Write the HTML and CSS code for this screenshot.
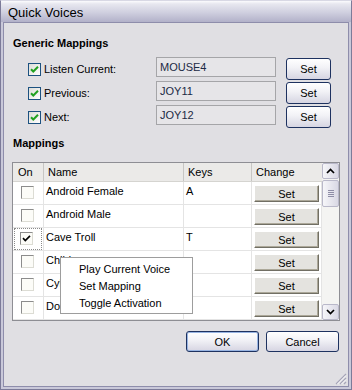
FILE: index.html
```html
<!DOCTYPE html>
<html>

<head>
    <title>Quick Voices</title>
    <link rel="stylesheet" href="styles.css">
</head>

<body>
    <div class="window">
        <div class="titlebar">Quick Voices</div>
        <div class="client">
            <h2 class="group-title">Generic Mappings</h2>
            <div class="map-rows">
                <div class="map-row">
                    <label class="chk">
                        <span class="xp-box"><svg viewBox="0 0 11 11" width="11" height="11"><path d="M2 5.2 L4.3 7.5 L9 2.8" fill="none" stroke="#21a121" stroke-width="2"/></svg></span>
                        Listen Current:
                    </label>
                    <div class="field">MOUSE4</div>
                    <button class="xp-btn set-btn">Set</button>
                </div>
                <div class="map-row">
                    <label class="chk">
                        <span class="xp-box"><svg viewBox="0 0 11 11" width="11" height="11"><path d="M2 5.2 L4.3 7.5 L9 2.8" fill="none" stroke="#21a121" stroke-width="2"/></svg></span>
                        Previous:
                    </label>
                    <div class="field">JOY11</div>
                    <button class="xp-btn set-btn">Set</button>
                </div>
                <div class="map-row">
                    <label class="chk">
                        <span class="xp-box"><svg viewBox="0 0 11 11" width="11" height="11"><path d="M2 5.2 L4.3 7.5 L9 2.8" fill="none" stroke="#21a121" stroke-width="2"/></svg></span>
                        Next:
                    </label>
                    <div class="field">JOY12</div>
                    <button class="xp-btn set-btn">Set</button>
                </div>
            </div>

            <h2 class="group-title mappings-title">Mappings</h2>
            <div class="list">
                <div class="list-main">
                    <div class="list-head">
                        <div class="col-on">On</div>
                        <div class="col-name">Name</div>
                        <div class="col-keys">Keys</div>
                        <div class="col-change">Change</div>
                    </div>
                    <!-- rows -->
                    <div class="list-row">
                        <div class="col-on"><span class="flat-box"></span></div>
                        <div class="col-name">Android Female</div>
                        <div class="col-keys">A</div>
                        <div class="col-change"><button class="row-btn">Set</button></div>
                    </div>
                    <div class="list-row">
                        <div class="col-on"><span class="flat-box"></span></div>
                        <div class="col-name">Android Male</div>
                        <div class="col-keys"></div>
                        <div class="col-change"><button class="row-btn">Set</button></div>
                    </div>
                    <div class="list-row">
                        <div class="col-on"><span class="focus"><span class="flat-box"><svg viewBox="0 0 11 11" width="11" height="11"><path d="M2 5.2 L4.3 7.5 L9 2.8" fill="none" stroke="#000" stroke-width="1.7"/></svg></span></span></div>
                        <div class="col-name">Cave Troll</div>
                        <div class="col-keys">T</div>
                        <div class="col-change"><button class="row-btn">Set</button></div>
                    </div>
                    <div class="list-row">
                        <div class="col-on"><span class="flat-box"></span></div>
                        <div class="col-name">Child</div>
                        <div class="col-keys"></div>
                        <div class="col-change"><button class="row-btn">Set</button></div>
                    </div>
                    <div class="list-row">
                        <div class="col-on"><span class="flat-box"></span></div>
                        <div class="col-name">Cyborg</div>
                        <div class="col-keys"></div>
                        <div class="col-change"><button class="row-btn">Set</button></div>
                    </div>
                    <div class="list-row">
                        <div class="col-on"><span class="flat-box"></span></div>
                        <div class="col-name">Dog</div>
                        <div class="col-keys"></div>
                        <div class="col-change"><button class="row-btn">Set</button></div>
                    </div>
                </div>
                <div class="scrollbar">
                    <div class="sb-btn"><svg viewBox="0 0 9 6" width="9" height="6"><path d="M1 5 L4.5 1.5 L8 5" fill="none" stroke="#000" stroke-width="1.7"/></svg></div>
                    <div class="sb-thumb"><span></span><span></span><span></span><span></span></div>
                    <div class="sb-track"></div>
                    <div class="sb-btn"><svg viewBox="0 0 9 6" width="9" height="6"><path d="M1 1 L4.5 4.5 L8 1" fill="none" stroke="#000" stroke-width="1.7"/></svg></div>
                </div>
            </div>

            <div class="actions">
                <button class="xp-btn action-btn default">OK</button>
                <button class="xp-btn action-btn">Cancel</button>
            </div>
            <svg class="grip" viewBox="0 0 12 12" width="12" height="12">
                <path d="M11 1 L1 11 M11 5 L5 11 M11 9 L9 11" stroke="#a6a5b8" stroke-width="1.2"/>
                <path d="M11 2.5 L2.5 11 M11 6.5 L6.5 11" stroke="#fff" stroke-width="0.8"/>
            </svg>
        </div>

        <!-- context menu over the list -->
        <div class="menu">
            <div class="menu-item">Play Current Voice</div>
            <div class="menu-item">Set Mapping</div>
            <div class="menu-item">Toggle Activation</div>
        </div>
    </div>
</body>

</html>
```

FILE: styles.css
```css
body {
    margin: 0;
    background: #e8e8e8;
    font-family: "Liberation Sans", Arial, sans-serif;
    font-size: 11px;
    color: #000;
}

.window {
    position: relative;
    width: 352px;
    height: 390px;
    box-sizing: border-box;
    display: flex;
    flex-direction: column;
    background: #c9c8d9;
    border: 1px solid #7c7b99;
    border-top-color: #d8d8e4;
    padding: 0 2px 2px;
}

.titlebar {
    height: 21px;
    margin: 0 -2px;
    padding: 2px 0 0 7px;
    box-sizing: border-box;
    font-size: 13px;
    line-height: 19px;
    background: linear-gradient(to bottom, #fbfbfd 0, #e7e7ef 3px, #cfcfdf 55%, #b2b1c9 100%);
}

.client {
    position: relative;
    flex: 1;
    display: flex;
    flex-direction: column;
    background: #e0dfe3;
    border: 1px solid #8e8dab;
}

.group-title {
    margin: 14px 0 0 9px;
    font-size: 11px;
    line-height: 13px;
    font-weight: bold;
}

.mappings-title {
    margin-top: 9px;
}

.map-rows {
    margin-top: 8px;
    padding-left: 24px;
    display: flex;
    flex-direction: column;
    gap: 2px;
}

.map-row {
    display: flex;
    align-items: flex-start;
    height: 22px;
}

.chk {
    width: 128px;
    height: 22px;
    display: flex;
    align-items: center;
    gap: 3px;
}

.xp-box {
    width: 11px;
    height: 11px;
    border: 1px solid #1c5180;
    background: linear-gradient(135deg, #dcdcd7, #ffffff);
    display: flex;
}

.field {
    width: 120px;
    height: 20px;
    margin-top: -1px;
    box-sizing: border-box;
    border: 1px solid #a5a5a8;
    background: #e6e5e8;
    padding: 3px 0 0 3px;
    color: #1b2a44;
}

.xp-btn {
    font-family: "Liberation Sans", Arial, sans-serif;
    font-size: 11px;
    color: #000;
    border: 1px solid #1e3260;
    border-radius: 3px;
    background: linear-gradient(to bottom, #ffffff 0, #f3f3f7 40%, #d6d5e2 100%);
    padding: 0;
}

.set-btn {
    width: 45px;
    height: 22px;
    margin-left: 10px;
}

.list {
    margin: 12px 0 0 8px;
    width: 328px;
    height: 159px;
    box-sizing: border-box;
    border: 1px solid #8e8e94;
    background: #fff;
    display: flex;
    overflow: hidden;
}

.list-main {
    width: 309px;
}

.list-head,
.list-row {
    display: flex;
}

.list-head {
    height: 19px;
    box-sizing: border-box;
    background: #ebeae8;
    border-bottom: 1px solid #d5d4d0;
    line-height: 18px;
}

.list-head > div {
    box-sizing: border-box;
    padding-left: 4px;
    border-right: 1px solid #c7c6c4;
}

.list-head .col-on {
    padding-left: 5px;
}

.list-head .col-change {
    border-right: none;
}

.col-on {
    width: 31px;
}

.col-name {
    width: 140px;
}

.col-keys {
    width: 68px;
}

.col-change {
    width: 70px;
}

.list-row {
    height: 23px;
    box-sizing: border-box;
    border-bottom: 1px solid #e4e4e4;
}

.list-row > div {
    box-sizing: border-box;
    border-right: 1px solid #e4e4e4;
    padding: 3px 0 0 2px;
}

.list-row .col-on {
    padding: 4px 0 0 8px;
}

.list-row .col-change {
    padding: 3px 0 0 2px;
}

.flat-box {
    display: flex;
    width: 11px;
    height: 11px;
    border: 1px solid;
    border-color: #8c8c8c #dcdcd4 #dcdcd4 #8c8c8c;
    background: #fcfcf8;
}

.focus {
    display: block;
    margin: -4px 0 0 -7px;
    width: 28px;
    height: 22px;
    box-sizing: border-box;
    border: 1px dotted #8a8a8a;
    padding: 3px 0 0 5px;
}

.row-btn {
    width: 65px;
    height: 17px;
    padding: 0;
    font-family: "Liberation Sans", Arial, sans-serif;
    font-size: 11px;
    color: #000;
    background: #e4e3df;
    border: 1px solid;
    border-color: #ffffff #716f64 #716f64 #ffffff;
    box-shadow: inset -1px -1px 0 #aca899;
}

.scrollbar {
    width: 17px;
    display: flex;
    flex-direction: column;
    background: #f4f4f2;
}

.sb-btn {
    height: 16px;
    box-sizing: border-box;
    border: 1px solid #b9b8c9;
    border-radius: 2px;
    background: linear-gradient(to right, #f6f6f9, #d9d8e4);
    display: flex;
    align-items: center;
    justify-content: center;
}

.sb-thumb {
    height: 27px;
    margin-top: 1px;
    box-sizing: border-box;
    border: 1px solid #b9b8c9;
    border-radius: 2px;
    background: linear-gradient(to right, #f6f6f9, #d9d8e4);
    display: flex;
    flex-direction: column;
    align-items: center;
    justify-content: center;
    gap: 1px;
}

.sb-thumb span {
    width: 6px;
    height: 1px;
    background: #8e8da6;
}

.sb-track {
    flex: 1;
}

.actions {
    margin-top: 10px;
    padding-right: 9px;
    display: flex;
    justify-content: flex-end;
    gap: 7px;
}

.action-btn {
    width: 73px;
    height: 21px;
}

.action-btn.default {
    box-shadow: inset 0 0 0 1px #98b4e2;
}

.grip {
    position: absolute;
    right: 1px;
    bottom: 1px;
}

.menu {
    position: absolute;
    left: 59px;
    top: 256px;
    width: 133px;
    height: 57px;
    box-sizing: border-box;
    background: #fff;
    border: 1px solid #9d9d9d;
    padding-top: 3px;
}

.menu-item {
    height: 17px;
    line-height: 17px;
    padding-left: 18px;
}
```
